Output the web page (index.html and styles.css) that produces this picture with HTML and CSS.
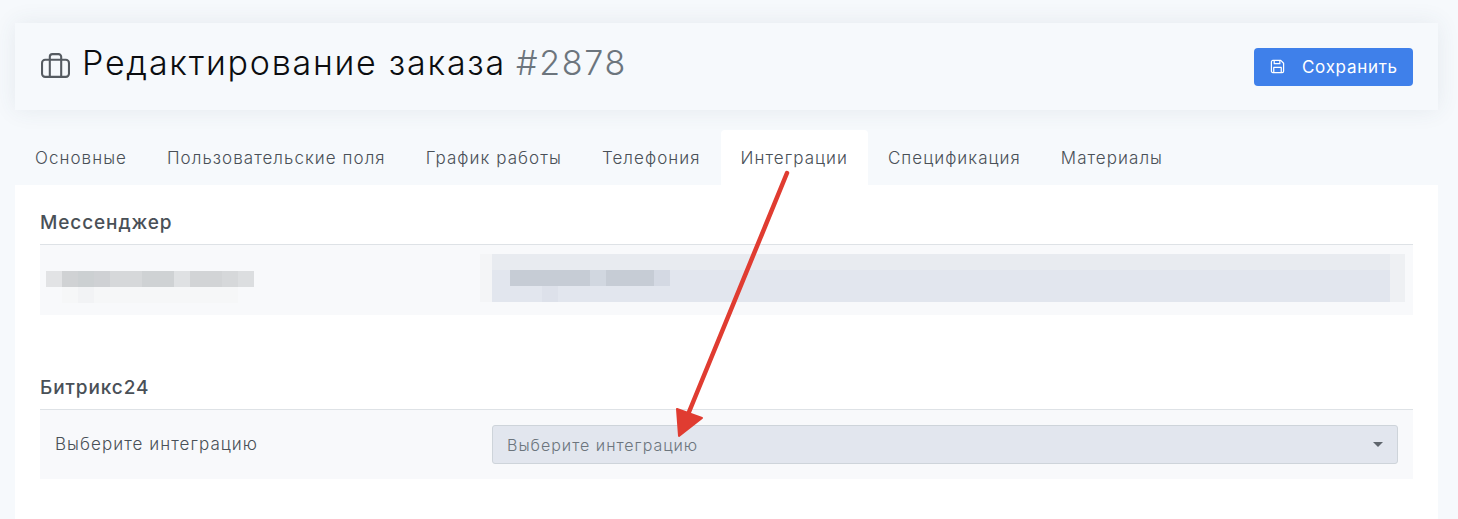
FILE: index.html
```html
<!DOCTYPE html>
<html lang="ru">
<head>
    <meta charset="UTF-8">
    <meta name="viewport" content="width=device-width, initial-scale=1.0">
    <title>Редактирование заказа</title>
    <link rel="stylesheet" href="styles.css">
</head>
<body>

<header class="page-header">
    <h1 class="page-title">
        <svg class="title-icon" viewBox="0 0 28 24" fill="none" stroke="currentColor" stroke-width="2" stroke-linejoin="round">
            <rect x="1" y="6.5" width="26" height="16.500" rx="3"/>
            <path d="M8.500 23V3.500a2.500 2.500 0 0 1 2.500-2.500h6a2.500 2.500 0 0 1 2.500 2.500V23"/>
        </svg>
        <span>Редактирование заказа</span>
        <span class="order-num">#2878</span>
    </h1>
    <button class="btn-save">
        <svg class="save-icon" viewBox="0 0 16 16" fill="none" stroke="currentColor" stroke-width="1.300" stroke-linejoin="round">
            <path d="M1.500 3a1.500 1.500 0 0 1 1.500-1.500h8.500l3 3V13a1.500 1.500 0 0 1-1.500 1.500H3A1.500 1.500 0 0 1 1.500 13z"/>
            <path d="M4.500 1.500v3.500h6V1.500M4 14.500V9h8v5.500"/>
        </svg>
        Сохранить
    </button>
</header>

<nav class="tabs">
    <a href="#">Основные</a>
    <a href="#">Пользовательские поля</a>
    <a href="#">График работы</a>
    <a href="#">Телефония</a>
    <a href="#" class="active">Интеграции</a>
    <a href="#">Спецификация</a>
    <a href="#">Материалы</a>
</nav>

<main class="content">
    <h2 class="section-title">Мессенджер</h2>
    <div class="form-row form-row-blurred">
        <div class="blur-label"></div>
        <div class="blur-field"></div>
    </div>

    <h2 class="section-title section-second">Битрикс24</h2>
    <div class="form-row">
        <label class="row-label">Выберите интеграцию</label>
        <div class="select-box">
            <span>Выберите интеграцию</span>
            <i class="select-caret"></i>
        </div>
    </div>
</main>

<!-- red annotation arrow drawn over the screenshot -->
<svg class="arrow" viewBox="0 0 1458 519" fill="none">
    <path d="M787 173L689 412" stroke="#e03c31" stroke-width="4.500" stroke-linecap="round"/>
    <path d="M677 409L702 418L679 436Z" fill="#e03c31" stroke="#e03c31" stroke-width="2" stroke-linejoin="round"/>
</svg>

</body>
</html>
```

FILE: styles.css
```css
html, body {
    height: 100%;
}

body {
    font-family: Inter, "Open Sans", sans-serif;
    margin: 0;
    padding: 23px 20px 0 15px;
    background-color: #f6f9fc;
    position: relative;
    overflow: hidden;
    box-sizing: border-box;
}

.page-header {
    height: 87px;
    display: flex;
    align-items: center;
    justify-content: space-between;
    padding: 0 25px 0 26px;
    background-color: #f6f9fc;
    box-shadow: 0 0 22px rgba(60, 80, 100, 0.09);
}

.page-title {
    margin: 0 0 8px;
    display: flex;
    align-items: center;
    font-size: 34px;
    font-weight: 300;
    letter-spacing: 1.75px;
    color: #0b0d10;
}

.title-icon {
    width: 29px;
    height: 25px;
    margin: 5px 12px 0 0;
    color: #555b61;
}

.order-num {
    color: #6c757d;
    margin-left: 10px;
    letter-spacing: 1.700px;
}

.btn-save {
    width: 159px;
    height: 38px;
    display: flex;
    align-items: center;
    padding: 0 0 0 16px;
    border: none;
    border-radius: 4px;
    background-color: #3f80ea;
    color: white;
    font-family: inherit;
    font-size: 17px;
    letter-spacing: 0.7px;
}

.save-icon {
    width: 15px;
    height: 15px;
    margin-right: 17px;
}

.tabs {
    display: flex;
    margin-top: 20px;
    height: 55px;
}

.tabs a {
    padding: 0 20px;
    display: flex;
    align-items: center;
    color: #495057;
    text-decoration: none;
    font-size: 17px;
    font-weight: 300;
    letter-spacing: 1.05px;
}

.tabs a.active {
    background-color: white;
    border-radius: 4px 4px 0 0;
}

.content {
    background-color: white;
    padding: 25px 25px 60px;
    height: 334px;
    box-sizing: border-box;
}

.section-title {
    margin: 0;
    height: 34px;
    border-bottom: 1px solid #dee2e6;
    font-size: 19px;
    font-weight: 500;
    line-height: 26px;
    letter-spacing: 0.9px;
    color: #495057;
}

.section-second {
    margin-top: 60px;
}

.form-row {
    display: flex;
    align-items: center;
    height: 69px;
    padding: 0 15px;
    background-color: #f8f9fb;
}

.form-row-blurred {
    position: relative;
    height: 70px;
}

.row-label {
    width: 437px;
    flex-shrink: 0;
    font-size: 17px;
    font-weight: 300;
    letter-spacing: 1.05px;
    color: #495057;
    margin-top: -2px;
}

.select-box {
    flex: 1;
    height: 39px;
    box-sizing: border-box;
    display: flex;
    align-items: center;
    justify-content: space-between;
    padding: 0 14px 0 14px;
    background-color: #e2e6ee;
    border: 1px solid #ced4da;
    border-radius: 3px;
    color: #6c757d;
    font-size: 16px;
    font-weight: 300;
    letter-spacing: 1px;
}

.select-caret {
    width: 0;
    height: 0;
    border-left: 5px solid transparent;
    border-right: 5px solid transparent;
    border-top: 5px solid #5f656c;
}

/* pixelated parts that hide the private values */
.blur-label {
    width: 208px;
    height: 32px;
    margin: 13px 0 0 -9px;
    background:
        linear-gradient(90deg, #e2e3e5 0 16px, #d0d2d4 16px 32px, #ccd0d2 32px 48px, #cfd1d4 48px 64px, #d6d8da 64px 96px, #cfd2d4 96px 128px, #dfe1e3 128px 144px, #d2d4d6 144px 176px, #d6d8da 176px 192px, #dcdee0 192px) 0 0 / 100% 16px no-repeat,
        linear-gradient(90deg, transparent 0 16px, #f6f7f8 16px 32px, #f2f3f5 32px 48px, #f6f7f8 48px 192px, transparent 192px) 0 16px / 100% 16px no-repeat;
}

.blur-field {
    position: absolute;
    left: 440px;
    top: 9px;
    width: 925px;
    height: 48px;
    background:
        linear-gradient(90deg, transparent 0 30px, #c6ccd5 30px 110px, #d1d7e0 110px 126px, #c6ccd5 126px 174px, #d4d9e3 174px 190px, transparent 190px) 0 16px / 100% 16px no-repeat,
        linear-gradient(90deg, transparent 0 62px, #dde1ea 62px 78px, transparent 78px) 0 32px / 100% 16px no-repeat,
        linear-gradient(90deg, #f4f5f7 0 12px, transparent 12px 910px, #eef0f3 910px) 0 0 / 100% 100% no-repeat,
        linear-gradient(180deg, #e8ebf0 0 16px, #e2e6ee 16px);
}

.arrow {
    position: absolute;
    left: 0;
    top: 0;
    width: 1458px;
    height: 519px;
}
```
